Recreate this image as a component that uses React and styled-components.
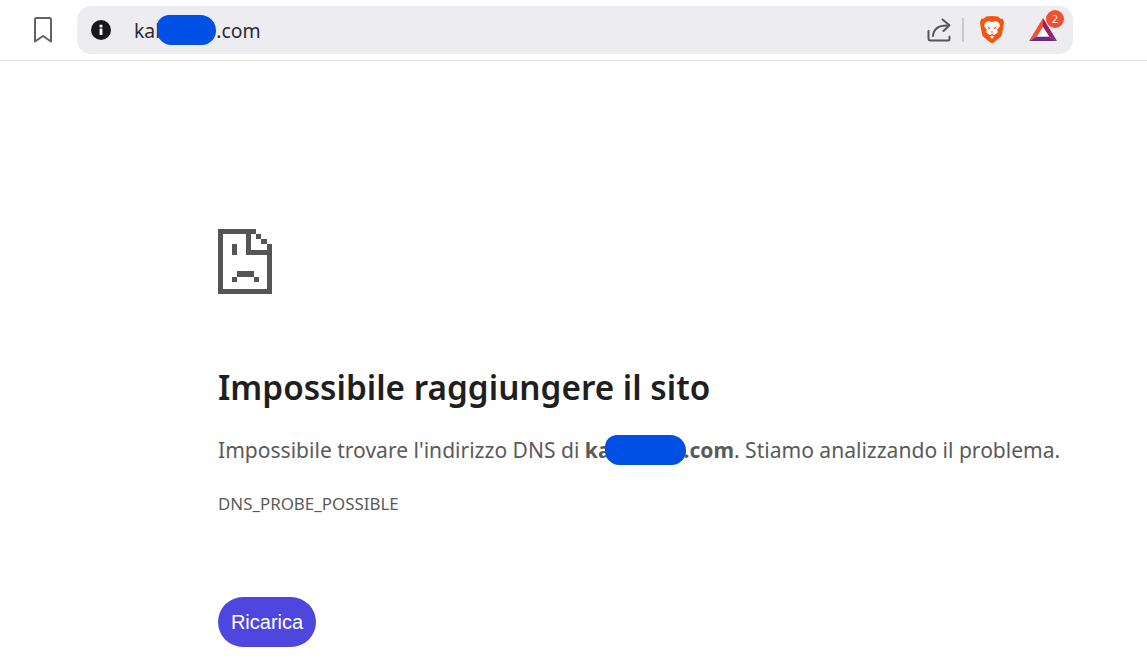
import React from 'react';
import styled, { createGlobalStyle } from 'styled-components';

const GlobalStyle = createGlobalStyle`
    html, body {
        margin: 0;
        background: #fff;
    }
    body {
        width: 1147px;
        height: 670px;
        overflow: hidden;
        font-family: "Noto Sans", "Open Sans", sans-serif;
    }
`;

const Toolbar = styled.header`
    height: 60px;
    display: flex;
    align-items: center;
    padding-left: 33px;
    border-bottom: 1px solid #e4e4e4;
    box-sizing: content-box;
`;

const BookmarkButton = styled.div`
    width: 20px;
    height: 28px;
    margin-right: 24px;
    color: #5f6368;
    display: flex;
    align-items: center;
`;

const AddressBar = styled.div`
    width: 996px;
    height: 48px;
    background: #edecf1;
    border-radius: 14px;
    display: flex;
    align-items: center;
    padding: 0 16px 0 14px;
    box-sizing: border-box;
`;

const InfoIcon = styled.div`
    width: 20px;
    height: 20px;
    margin-right: 23px;
`;

const Url = styled.div`
    flex: 1;
    font-size: 19.4px;
    color: #2b2b2f;
    display: flex;
    align-items: center;
    white-space: pre;
`;

const Blob = styled.span`
    display: inline-block;
    width: ${p => p.$w}px;
    height: ${p => p.$h}px;
    margin: 0 ${p => p.$mr}px 0 ${p => p.$ml}px;
    background: #0050e6;
    border-radius: ${p => p.$h * 0.42}px ${p => p.$h * 0.55}px ${p => p.$h * 0.5}px ${p => p.$h * 0.5}px;
    vertical-align: ${p => p.$va || 'middle'};
`;

const ActionIcons = styled.div`
    display: flex;
    align-items: center;
`;

const IconSlot = styled.div`
    width: ${p => p.$w}px;
    height: ${p => p.$h}px;
    margin-left: ${p => p.$ml || 0}px;
    position: relative;
`;

const Divider = styled.div`
    width: 2px;
    height: 24px;
    margin-left: 11px;
    background: #c9c9cd;
`;

const Badge = styled.span`
    position: absolute;
    top: -8px;
    right: -7px;
    width: 18px;
    height: 18px;
    border-radius: 50%;
    background: #f4502f;
    color: #fff;
    font-size: 11px;
    line-height: 18px;
    text-align: center;
`;

const Page = styled.main`
    padding: 168px 0 0 218px;
    display: flex;
    flex-direction: column;
    align-items: flex-start;
`;

const SadFile = styled.svg`
    display: block;
    width: 54px;
    height: 65px;
    margin-bottom: 70px;
`;

const Title = styled.h1`
    margin: 0 0 25px;
    font-size: 33.3px;
    line-height: 46px;
    font-weight: 600;
    color: #1f1f1f;
    white-space: nowrap;
`;

const Message = styled.p`
    margin: 0 0 27px;
    height: 30px;
    font-size: 21.05px;
    line-height: 30px;
    color: #5a5a5a;
    white-space: nowrap;

    strong {
        font-weight: 700;
    }
`;

const ErrorCode = styled.div`
    font-size: 16.9px;
    line-height: 24px;
    color: #5a5a5a;
    margin-bottom: 81px;
`;

const ReloadButton = styled.button`
    width: 98px;
    height: 50px;
    border: 0;
    border-radius: 25px;
    background: #4f46e0;
    color: #fff;
    font-family: "Liberation Sans", Arial, sans-serif;
    font-size: 20px;
    padding: 0;
`;

const BookmarkIcon = () => (
    <svg width="20" height="28" viewBox="0 0 20 28" fill="none" stroke="currentColor" strokeWidth="2" strokeLinejoin="round">
        <path d="M2 3.5 Q2 2 3.5 2 H16.5 Q18 2 18 3.5 V25.5 L10 20 L2 25.5 Z" />
    </svg>
);

const Info = () => (
    <svg width="20" height="20" viewBox="0 0 20 20">
        <circle cx="10" cy="10" r="10" fill="#18181b" />
        <rect x="8.6" y="8.6" width="2.8" height="6.4" fill="#fff" />
        <rect x="8.6" y="4.8" width="2.8" height="2.6" fill="#fff" />
    </svg>
);

const ShareIcon = () => (
    <svg width="24" height="24" viewBox="0 0 24 24" fill="none" stroke="#55565a" strokeWidth="2" strokeLinecap="round" strokeLinejoin="round">
        <path d="M1.5 13 V20.5 Q1.5 22.5 3.5 22.5 H21 Q22.5 22.5 22.5 21 V18.5" />
        <path d="M6 18 C6.5 11.5 11 7.5 20 7.5" />
        <path d="M15.5 1.5 L22.5 7.2 L16.5 13" />
    </svg>
);

const BraveIcon = () => (
    <svg width="24" height="28" viewBox="0 0 24 28">
        <path d="M12 0 L18 0.5 L20 2.5 L23 3 L24 7 L23 13 L21.5 20 L15 25.5 L12 27.5 L9 25.5 L2.5 20 L1 13 L0 7 L1 3 L4 2.5 L6 0.5 Z" fill="#f9540f" />
        <path d="M5 7 L8 5 L12 6 L16 5 L19 7 L20 10 L17 14 L18 16 L14.5 19 L12 18 L9.5 19 L6 16 L7 14 L4 10 Z" fill="#fff" />
        <path d="M7 10 L10.5 12 L9 13.5 Z M17 10 L13.5 12 L15 13.5 Z" fill="#f9540f" />
        <path d="M10 20.5 L12 19.5 L14 20.5 L12 23 Z" fill="#fff" />
        <path d="M10.5 15.5 H13.5 L12 17 Z" fill="#f9540f" />
    </svg>
);

const BatIcon = () => (
    <svg width="28" height="24" viewBox="0 0 28 24">
        <path d="M14 0 L0 23 L8 18.5 L14 9 Z" fill="#f4502f" />
        <path d="M14 0 L28 23 L20 18.5 L14 9 Z" fill="#9e1f63" />
        <path d="M0 23 H28 L20 18.5 H8 Z" fill="#662d91" />
        <path d="M14 9 L20 18.5 H8 Z" fill="#fff" />
    </svg>
);

// dithered chrome error icon, every block measured from the screenshot
const FILE_BLOCKS = [
    [0, 0, 38, 5], [0, 5, 5, 60], [5, 60, 49, 5], [49, 15, 5, 50],
    [28, 5, 5, 21], [33, 21, 16, 5], [38, 5, 5, 5], [43, 10, 6, 5],
    [14, 15, 5, 11], [19, 42, 17, 6], [14, 48, 5, 5], [36, 48, 5, 5],
];

const App = () => (
    <>
        <GlobalStyle />
        <Toolbar>
            <BookmarkButton><BookmarkIcon /></BookmarkButton>
            <AddressBar>
                <InfoIcon><Info /></InfoIcon>
                <Url>kal<Blob $w={59} $h={30} $ml={-3} $mr={0} />.com</Url>
                <ActionIcons>
                    <ShareIcon />
                    <Divider />
                    <IconSlot $w={24} $h={28} $ml={16}><BraveIcon /></IconSlot>
                    <IconSlot $w={28} $h={24} $ml={25}><BatIcon /><Badge>2</Badge></IconSlot>
                </ActionIcons>
            </AddressBar>
        </Toolbar>
        <Page>
            <SadFile viewBox="0 0 54 65" shapeRendering="crispEdges">
                {FILE_BLOCKS.map(([x, y, w, h]) => (
                    <rect key={`${x}-${y}`} x={x} y={y} width={w} height={h} fill="#555" />
                ))}
            </SadFile>
            <Title>Impossibile raggiungere il sito</Title>
            <Message>
                Impossibile trovare l'indirizzo DNS di <strong>ka<Blob $w={81} $h={30} $ml={-6} $mr={-2} $va="-7.4px" />.com</strong>. Stiamo analizzando il problema.
            </Message>
            <ErrorCode>DNS_PROBE_POSSIBLE</ErrorCode>
            <ReloadButton>Ricarica</ReloadButton>
        </Page>
    </>
);

export default App;
